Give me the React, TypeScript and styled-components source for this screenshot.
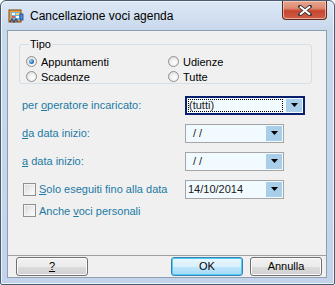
import React from "react";
import styled, { createGlobalStyle, css } from "styled-components";

const GlobalStyle = createGlobalStyle`
  html, body {
    margin: 0;
    padding: 0;
    background: #ffffff;
  }
  body {
    font-family: "Liberation Sans", Arial, sans-serif;
    font-size: 11px;
  }
`;

const Window = styled.div`
  width: 335px;
  height: 285px;
  box-sizing: border-box;
  border: 1px solid #4a5b72;
  border-radius: 6px 6px 2px 2px;
  background: linear-gradient(180deg, #dde8f5 0px, #c9d9ec 28px, #c3d4ea 100%);
  box-shadow: inset 0 0 0 1px #eef4fb;
  display: flex;
  flex-direction: column;
  padding: 0 7px 6px 6px;
`;

const TitleBar = styled.div`
  height: 29px;
  display: flex;
  align-items: center;
  gap: 6px;
  padding-left: 1px;
`;

const Title = styled.span`
  flex: 1;
  font-family: "Liberation Sans", Arial, sans-serif;
  font-size: 12px;
  color: #000;
  padding-top: 1px;
`;

const CloseButton = styled.div`
  align-self: flex-start;
  width: 43px;
  height: 18px;
  border: 1px solid #5b2c21;
  border-top: none;
  border-radius: 0 0 4px 4px;
  background: linear-gradient(180deg, #e8a58f 0%, #dd8a72 40%, #c6452c 55%, #d0604a 100%);
  box-shadow: inset 0 0 0 1px rgba(255, 220, 210, 0.6);
  display: flex;
  align-items: center;
  justify-content: center;
`;

const Client = styled.div`
  flex: 1;
  border: 1px solid #8c9db4;
  background: #f0f0f0;
  display: flex;
  flex-direction: column;
`;

const MainPanel = styled.div`
  height: 217px;
  border-bottom: 1px solid #a0a0a0;
  padding: 7px 14px 0 11px;
  display: flex;
  flex-direction: column;
`;

const GroupBox = styled.fieldset`
  margin: 0;
  padding: 5px 6px 0 6px;
  border: 1px solid #d5dfe5;
  border-radius: 3px;
  display: grid;
  grid-template-columns: 142px 1fr;
  row-gap: 2px;
`;

const Legend = styled.legend`
  padding: 0 1px;
  margin-left: 3px;
  font-size: 11px;
  color: #000;
`;

const Option = styled.label`
  display: flex;
  align-items: center;
  gap: 4px;
  height: 13px;
  color: #000;
`;

const RadioCircle = styled.span<{ $checked?: boolean }>`
  width: 11px;
  height: 11px;
  box-sizing: border-box;
  border-radius: 50%;
  border: 1px solid #8f8f8f;
  background: radial-gradient(circle at 60% 65%, #ffffff 0%, #f2f2f2 40%, #d4d4d4 100%);
  display: flex;
  align-items: center;
  justify-content: center;
  ${(p) =>
    p.$checked &&
    css`
      &::after {
        content: "";
        width: 5px;
        height: 5px;
        border-radius: 50%;
        background: radial-gradient(circle at 35% 35%, #9ed4f5 0%, #2a75b8 60%, #144b86 100%);
      }
    `}
`;

const Form = styled.div`
  display: grid;
  grid-template-columns: 163px auto;
  grid-auto-rows: 28px;
  align-items: center;
  margin-top: 7px;
  margin-left: 3px;
`;

const FieldLabel = styled.span`
  color: #1c7aa3;
`;

const Combo = styled.div<{ $width: number; $focused?: boolean }>`
  width: ${(p) => p.$width}px;
  height: 19px;
  box-sizing: border-box;
  border: 1px solid ${(p) => (p.$focused ? "#0a1f6b" : "#a5a5a5")};
  ${(p) => p.$focused && "box-shadow: inset 0 0 0 1px #0a1f6b;"}
  background: #f1faff;
  display: flex;
  align-items: stretch;
  padding: ${(p) => (p.$focused ? "2px" : "1px")};
`;

const ComboText = styled.div<{ $focused?: boolean; $pad?: number }>`
  flex: 1;
  display: flex;
  align-items: center;
  padding-left: ${(p) => (p.$pad ?? 6)}px;
  color: #1a1a1a;
  font-size: 11px;
  ${(p) => p.$focused && "outline: 1px dotted #000; outline-offset: -1px; margin-right: 3px;"}
`;

const ComboArrow = styled.div`
  width: 16px;
  background: #a8cee9;
  display: flex;
  align-items: center;
  justify-content: center;
`;

const CheckRow = styled.label`
  display: flex;
  align-items: center;
  gap: 3px;
  color: #1c7aa3;
`;

const CheckBox = styled.span`
  width: 13px;
  height: 13px;
  box-sizing: border-box;
  border: 1px solid #8e8f8f;
  background: linear-gradient(135deg, #d8d8d8 0%, #f0f0f0 60%, #ffffff 100%);
  box-shadow: inset 0 0 0 1px #f4f4f4;
  margin-left: 1px;
`;

const ExtraRow = styled.div`
  margin-top: 1px;
  margin-left: 3px;
`;

const ButtonBar = styled.div`
  flex: 1;
  display: flex;
  align-items: center;
  padding: 0 4px 1px 8px;
  gap: 7px;
`;

const Button = styled.button<{ $default?: boolean }>`
  width: 72px;
  height: 19px;
  box-sizing: border-box;
  margin: 0;
  padding: 0;
  border-radius: 3px;
  border: 1px solid ${(p) => (p.$default ? "#3c7fb1" : "#707070")};
  background: ${(p) =>
    p.$default
      ? "linear-gradient(180deg, #eaf6fd 0%, #d9f0fc 50%, #bee6fd 51%, #a7d9f5 100%)"
      : "linear-gradient(180deg, #f2f2f2 0%, #ebebeb 50%, #dddddd 51%, #cfcfcf 100%)"};
  box-shadow: inset 0 0 0 1px ${(p) => (p.$default ? "#48d0f8" : "#fcfcfc")};
  font-family: "Liberation Sans", Arial, sans-serif;
  font-size: 11px;
  color: #000;
  display: flex;
  align-items: center;
  justify-content: center;
`;

const Spacer = styled.div`
  flex: 1;
`;

const Arrow = () => (
  <svg width="7" height="4" viewBox="0 0 7 4">
    <path d="M0 0h7L3.5 4z" fill="#000" />
  </svg>
);

const AppIcon = () => (
  <svg width="16" height="16" viewBox="0 0 16 16">
    <rect x="1" y="2" width="12" height="12" fill="#f3a43b" stroke="#7a4a12" strokeWidth="1" />
    <rect x="3" y="4" width="9" height="8" fill="#6fb3e6" />
    <rect x="4" y="5" width="3" height="2" fill="#ffffff" />
    <rect x="8" y="5" width="3" height="2" fill="#f7d25b" />
    <rect x="4" y="8" width="3" height="2" fill="#e65a3c" />
    <rect x="8" y="8" width="3" height="2" fill="#ffffff" />
    <path d="M2 14l2-3 2 3 2-3 2 3" stroke="#1f3e80" strokeWidth="1.2" fill="none" />
    <rect x="12" y="6" width="3" height="6" fill="#4e8fd6" stroke="#1f3e80" strokeWidth="0.8" />
  </svg>
);

const CloseIcon = () => (
  <svg width="14" height="11" viewBox="0 0 14 11">
    <path
      d="M2 1.5l5 4 5-4M2 9.5l5-4 5 4"
      stroke="#3a3a3a"
      strokeWidth="3.6"
      fill="none"
      strokeLinecap="square"
    />
    <path d="M2 1.5l5 4 5-4M2 9.5l5-4 5 4" stroke="#ffffff" strokeWidth="2" fill="none" />
  </svg>
);

export default function App() {
  return (
    <>
      <GlobalStyle />
      <Window>
        <TitleBar>
          <AppIcon />
          <Title>Cancellazione voci agenda</Title>
          <CloseButton>
            <CloseIcon />
          </CloseButton>
        </TitleBar>
        <Client>
          <MainPanel>
            <GroupBox>
              <Legend>Tipo</Legend>
              <Option>
                <RadioCircle $checked />
                Appuntamenti
              </Option>
              <Option>
                <RadioCircle />
                Udienze
              </Option>
              <Option>
                <RadioCircle />
                Scadenze
              </Option>
              <Option>
                <RadioCircle />
                Tutte
              </Option>
            </GroupBox>
            <Form>
              <FieldLabel>
                per <u>o</u>peratore incaricato:
              </FieldLabel>
              <Combo $width={120} $focused>
                <ComboText $focused $pad={1}>
                  (tutti)
                </ComboText>
                <ComboArrow>
                  <Arrow />
                </ComboArrow>
              </Combo>
              <FieldLabel>
                <u>d</u>a data inizio:
              </FieldLabel>
              <Combo $width={99}>
                <ComboText>/ /</ComboText>
                <ComboArrow>
                  <Arrow />
                </ComboArrow>
              </Combo>
              <FieldLabel>
                <u>a</u> data inizio:
              </FieldLabel>
              <Combo $width={99}>
                <ComboText>/ /</ComboText>
                <ComboArrow>
                  <Arrow />
                </ComboArrow>
              </Combo>
              <CheckRow>
                <CheckBox />
                <span>
                  <u>S</u>olo eseguiti fino alla data
                </span>
              </CheckRow>
              <Combo $width={99}>
                <ComboText $pad={1}>14/10/2014</ComboText>
                <ComboArrow>
                  <Arrow />
                </ComboArrow>
              </Combo>
            </Form>
            <ExtraRow>
              <CheckRow>
                <CheckBox />
                <span>
                  Anche <u>v</u>oci personali
                </span>
              </CheckRow>
            </ExtraRow>
          </MainPanel>
          <ButtonBar>
            <Button>
              <u>?</u>
            </Button>
            <Spacer />
            <Button $default>OK</Button>
            <Button>Annulla</Button>
          </ButtonBar>
        </Client>
      </Window>
    </>
  );
}
